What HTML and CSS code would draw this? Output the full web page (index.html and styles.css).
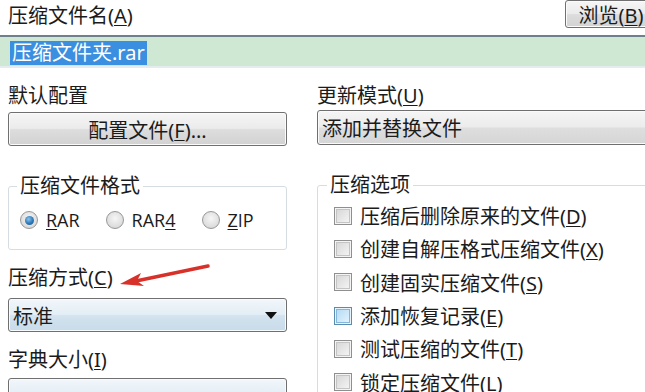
FILE: index.html
```html
<!DOCTYPE html>
<html lang="zh-CN">
<head>
    <meta charset="UTF-8">
    <title>压缩文件名和参数</title>
    <link rel="stylesheet" href="styles.css">
</head>
<body>

    <div class="dialog">
        <div class="name-row">
            <span class="label">压缩文件名(<u>A</u>)</span>
            <span class="btn browse"><span>浏览(<u>B</u>)</span></span>
        </div>

        <div class="name-field">
            <span class="selected">压缩文件夹.rar</span>
        </div>

        <div class="columns">
            <!-- left column -->
            <div class="col">
                <div class="label">默认配置</div>
                <div class="btn profile"><span>配置文件(<u>F</u>)...</span></div>

                <fieldset class="group format">
                    <legend>压缩文件格式</legend>
                    <div class="radios">
                        <span class="radio-item"><i class="radio on"></i><span><u>R</u>AR</span></span>
                        <span class="radio-item"><i class="radio"></i><span>RAR<u>4</u></span></span>
                        <span class="radio-item"><i class="radio"></i><span><u>Z</u>IP</span></span>
                    </div>
                </fieldset>

                <div class="label method">压缩方式(<u>C</u>)</div>
                <div class="combo blue">
                    <span>标准</span>
                    <svg class="caret" width="12" height="7" viewBox="0 0 12 7"><path d="M0 0h12L6 7z" fill="#111"/></svg>
                </div>

                <div class="label dict">字典大小(<u>I</u>)</div>
                <div class="combo blue last"></div>
            </div>

            <!-- right column -->
            <div class="col">
                <div class="label">更新模式(<u>U</u>)</div>
                <div class="combo gray">
                    <span>添加并替换文件</span>
                </div>

                <fieldset class="group options">
                    <legend>压缩选项</legend>
                    <div class="check-row"><i class="check"></i><span>压缩后删除原来的文件(<u>D</u>)</span></div>
                    <div class="check-row"><i class="check"></i><span>创建自解压格式压缩文件(<u>X</u>)</span></div>
                    <div class="check-row"><i class="check"></i><span>创建固实压缩文件(<u>S</u>)</span></div>
                    <div class="check-row"><i class="check hover"></i><span>添加恢复记录(<u>E</u>)</span></div>
                    <div class="check-row"><i class="check"></i><span>测试压缩的文件(<u>T</u>)</span></div>
                    <div class="check-row"><i class="check"></i><span>锁定压缩文件(<u>L</u>)</span></div>
                </fieldset>
            </div>
        </div>

        <!-- red arrow pointing at the label -->
        <svg class="arrow" width="100" height="30" viewBox="0 0 100 30">
            <path d="M92 4 L20 19" stroke="#d8312a" stroke-width="3.5" stroke-linecap="round"/>
            <path d="M4 22 L25 11 L21 19 L28 24 Z" fill="#d8312a"/>
        </svg>
    </div>

</body>
</html>
```

FILE: styles.css
```css
* {
    margin: 0;
    padding: 0;
    box-sizing: border-box;
}

body {
    width: 645px;
    height: 392px;
    overflow: hidden;
    background-color: #ffffff;
    font-family: "Noto Sans", "Noto Sans CJK SC", sans-serif;
    font-size: 20px;
    color: #1b1b1b;
}

.dialog {
    position: relative;
}

.label {
    height: 24px;
    line-height: 24px;
    white-space: nowrap;
}

u {
    text-decoration-thickness: 1px;
    text-underline-offset: 2px;
}

/* top row */
.name-row {
    display: flex;
    justify-content: space-between;
    align-items: flex-start;
    height: 30px;
    padding-left: 8px;
}

.name-row .label {
    margin-top: 4px;
}

.btn {
    display: flex;
    align-items: center;
    justify-content: center;
    border: 1px solid #707070;
    border-radius: 3px;
    background: linear-gradient(#f6f6f6 0%, #ebebeb 48%, #dddddd 52%, #d2d2d2 100%);
    box-shadow: inset 0 0 0 1px #fbfbfb;
    white-space: nowrap;
}

.browse {
    width: 86px;
    height: 28px;
    margin-right: -6px;
    padding-left: 6px;
}

.name-field {
    margin-top: 5px;
    height: 33px;
    border-top: 2px solid #6f7f8b;
    border-bottom: 2px solid #e4ecef;
    background-color: #cfe8d4;
    padding: 2px 0 0 10px;
}

.selected {
    display: inline-block;
    height: 24px;
    line-height: 24px;
    padding: 0 2px;
    background-color: #3b8fe0;
    color: #ffffff;
}

/* two columns */
.columns {
    display: grid;
    grid-template-columns: 279px 340px;
    column-gap: 30px;
    padding-left: 8px;
    margin-top: 16px;
}

.col {
    display: flex;
    flex-direction: column;
}

.profile {
    margin-top: 4px;
    height: 34px;
}

.combo {
    display: flex;
    align-items: center;
    justify-content: space-between;
    height: 35px;
    padding: 0 8px 0 4px;
    border: 1px solid #6f6f6f;
    border-radius: 3px;
    white-space: nowrap;
}

.combo.gray {
    margin-top: 2px;
    background: linear-gradient(#f5f5f5 0%, #ececec 48%, #dedede 52%, #d6d6d6 100%);
    box-shadow: inset 0 0 0 1px #fafafa;
}

.combo.blue {
    margin-top: 8px;
    height: 34px;
    background: linear-gradient(#f1f6fa 0%, #e4eef6 48%, #d3e3ef 52%, #c8dbe9 100%);
    box-shadow: inset 0 0 0 1px #f8fbfd;
}

.combo.last {
    margin-top: 6px;
}

.caret {
    margin-right: 1px;
}

/* group boxes */
.group {
    border: 1px solid #d5dde2;
    border-radius: 3px;
    margin-top: 28px;
}

.group legend {
    padding: 0 3px;
    height: 24px;
    line-height: 24px;
}

.format {
    height: 76px;
    padding: 8px 0 0 11px;
}

.format legend {
    margin-left: -3px;
}

.radios {
    display: flex;
    gap: 26px;
    height: 28px;
    align-items: center;
}

.radio-item {
    display: flex;
    align-items: center;
    gap: 8px;
    font-family: "Open Sans", "Noto Sans", sans-serif;
    font-size: 18px;
    white-space: nowrap;
}

.radio {
    width: 18px;
    height: 18px;
    border-radius: 50%;
    border: 1px solid #979797;
    background: radial-gradient(circle at 50% 40%, #f6f6f6 0%, #dcdcdc 70%, #c8c8c8 100%);
    display: flex;
    align-items: center;
    justify-content: center;
}

.radio.on::after {
    content: "";
    width: 9px;
    height: 9px;
    border-radius: 50%;
    background: radial-gradient(circle at 40% 35%, #8cc4ec 0%, #2c78b8 55%, #1c5488 100%);
}

.method {
    margin-top: 16px;
}

.dict {
    margin-top: 16px;
}

.options {
    padding: 2px 0 0 16px;
    height: 260px;
}

.options legend {
    margin-left: -7px;
}

.check-row {
    display: flex;
    align-items: center;
    gap: 8px;
    height: 33.3px;
    white-space: nowrap;
}

.check {
    width: 18px;
    height: 18px;
    border: 1px solid #8f8f8f;
    background-color: #f4f4f4;
    display: flex;
    align-items: center;
    justify-content: center;
}

.check::after {
    content: "";
    width: 12px;
    height: 12px;
    border: 1px solid #c4c4c4;
    background: linear-gradient(135deg, #d8d8d8, #f3f3f3);
}

.check.hover {
    border-color: #5a8cb0;
    background-color: #e8f4fc;
}

.check.hover::after {
    border-color: #86b6d8;
    background: linear-gradient(135deg, #b6dcf5, #e2f2fc);
}

/* annotation overlay */
.arrow {
    position: absolute;
    left: 116px;
    top: 262px;
}
```
